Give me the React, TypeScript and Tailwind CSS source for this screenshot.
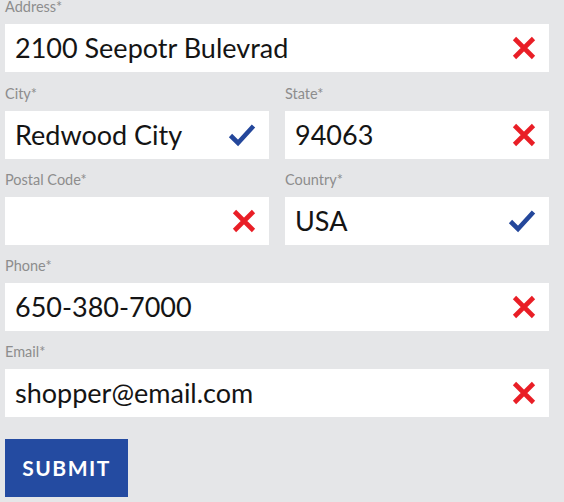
import React from "react";

type Status = "ok" | "bad";

const XIcon = () => (
  <svg width="24" height="24" viewBox="0 0 24 24" className="shrink-0">
    <path d="M2.5 2.5 L21.5 21.5 M21.5 2.5 L2.5 21.5" stroke="#e91e26" strokeWidth="4.6" strokeLinecap="butt" />
  </svg>
);

const CheckIcon = () => (
  <svg width="28" height="24" viewBox="0 0 28 24" className="shrink-0">
    <path d="M2.5 12.5 L10 20 L25.5 3" stroke="#24479b" strokeWidth="4.6" fill="none" strokeLinecap="butt" strokeLinejoin="miter" />
  </svg>
);

function Field({ label, value, status }: { label: string; value: string; status: Status }) {
  return (
    <div className="flex flex-col">
      <div className="text-[14.5px] leading-[12px] h-[23px] text-[#8d8d8d]">{label}</div>
      <div className="h-[48px] bg-white flex items-center pl-[10px] pr-[13px]">
        <span className="flex-1 text-[27px] text-[#141414] leading-[32px] whitespace-nowrap">{value}</span>
        {status === "ok" ? <CheckIcon /> : <XIcon />}
      </div>
    </div>
  );
}

export default function App() {
  return (
    <div
      className="w-[564px] h-[502px] bg-[#e5e6e8] overflow-hidden"
      style={{ fontFamily: "'Lato', 'Open Sans', sans-serif" }}
    >
      <div className="pl-[5px] pr-[15px] pt-[1px] flex flex-col">
        <Field label="Address*" value="2100 Seepotr Bulevrad" status="bad" />
        <div className="grid grid-cols-2 gap-x-4 gap-y-[15px] mt-[16px]">
          <Field label="City*" value="Redwood City" status="ok" />
          <Field label="State*" value="94063" status="bad" />
          <Field label="Postal Code*" value="" status="bad" />
          <Field label="Country*" value="USA" status="ok" />
        </div>
        <div className="mt-[15px]">
          <Field label="Phone*" value="650-380-7000" status="bad" />
        </div>
        <div className="mt-[15px]">
          <Field label="Email*" value="shopper@email.com" status="bad" />
        </div>
        <div className="pt-[22px]">
          <button className="w-[123px] h-[58px] bg-[#244ba1] text-white text-[21px] font-bold tracking-[1.5px]">
            SUBMIT
          </button>
        </div>
      </div>
    </div>
  );
}
